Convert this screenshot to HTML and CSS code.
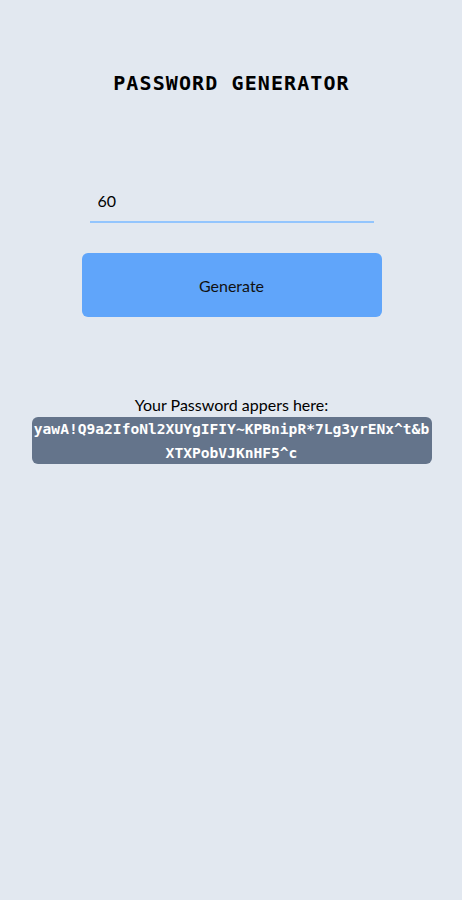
FILE: index.html
```html
<!DOCTYPE html>
<html lang="en">
<head>
<meta charset="utf-8">
<title>Password Generator</title>
<link rel="stylesheet" href="styles.css">
</head>
<body>
<main class="app">
  <h1 class="title">PASSWORD GENERATOR</h1>
  <div class="form">
    <input class="length" type="text" value="60">
    <button class="generate" type="button">Generate</button>
  </div>
  <section class="result">
    <p class="label">Your Password appers here:</p>
    <p class="password">yawA!Q9a2IfoNl2XUYgIFIY~KPBnipR*7Lg3yrENx^t&amp;b<br>XTXPobVJKnHF5^c</p>
  </section>
</main>
</body>
</html>
```
FILE: styles.css
```css
html, body {
  margin: 0;
  padding: 0;
  background: #e2e8f0;
  height: 100%;
}
body {
  font-family: "Lato", "Noto Sans", sans-serif;
  color: #000;
}
.app {
  display: flex;
  flex-direction: column;
  align-items: center;
  padding-top: 70px;
  padding-left: 1px;
}
.title {
  margin: 0;
  font-family: "DejaVu Sans Mono", monospace;
  font-weight: bold;
  font-size: 20px;
  letter-spacing: 1.1px;
  line-height: 26px;
}
.form {
  margin-top: 87px;
  display: flex;
  flex-direction: column;
  align-items: center;
  gap: 30px;
}
.length {
  width: 284px;
  box-sizing: border-box;
  height: 40px;
  padding: 0 8px 4px;
  border: none;
  border-bottom: 2px solid #93c5fd;
  background: transparent;
  font-family: inherit;
  font-size: 16px;
  color: #000;
  outline: none;
}
.generate {
  width: 300px;
  height: 64px;
  border: none;
  border-radius: 6px;
  background: #60a5fa;
  font-family: inherit;
  font-size: 16px;
  color: #111;
}
.result {
  margin-top: 76px;
  display: flex;
  flex-direction: column;
  align-items: center;
}
.label {
  margin: 0;
  font-size: 16px;
  line-height: 24px;
}
.password {
  margin: 0;
  width: 400px;
  box-sizing: border-box;
  padding: 0;
  background: #64748b;
  border-radius: 6px;
  color: #fff;
  font-family: "DejaVu Sans Mono", monospace;
  font-weight: bold;
  font-size: 14.6px;
  line-height: 23.5px;
  text-align: center;
  white-space: nowrap;
}
```
